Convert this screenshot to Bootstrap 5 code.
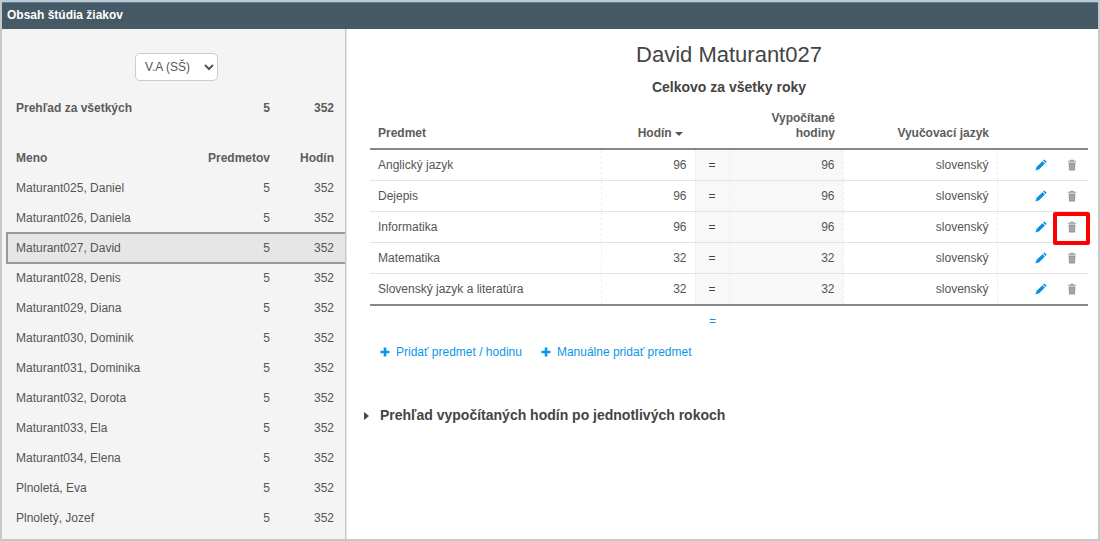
<!DOCTYPE html>
<html lang="sk">
<head>
<meta charset="utf-8">
<title>Obsah štúdia žiakov</title>
<link href="https://cdn.jsdelivr.net/npm/bootstrap@5.3.0/dist/css/bootstrap.min.css" rel="stylesheet">
<style>
html,body{height:100%;overflow:hidden;background:#fff}
body{font-family:"Liberation Sans",Arial,sans-serif;font-size:12px;color:#555}
.frame{height:541px;border:2px solid #c8c8c8}
.topbar{height:27px;background:#455a64;border-top:1px solid #3f86bd;color:#fff;font-weight:700;font-size:12px;line-height:25px;padding-left:5px}
.side{width:344px;background:#f4f4f4;border-right:1px solid #c8c8c8;box-shadow:1px 0 0 #e6e6e6;flex:none;overflow:hidden}
.sel-wrap{padding:24px 0 0 6px;height:64px;text-align:center}
.sel-box{width:83px;height:28px;font-size:12px;border:1px solid #ccc;border-radius:5px;background:#fff;color:#555;padding:0 0 0 5px;font-family:inherit}
.srow{height:30px;padding:0 11px 0 14px;align-items:center}
.srow .nm{flex:1 1 auto}
.srow .pr{flex:none;width:70px;text-align:right}
.srow .ho{flex:none;width:64px;text-align:right}
.shead{font-weight:700;color:#5c5c5c}
.total{margin-bottom:20px}
.srow.cur{background:#e6e6e6;border:2px solid #999;border-right:0;margin-left:4px;padding-left:8px;height:32px;margin-top:-1px;margin-bottom:-1px;position:relative}
.mainp{flex:1 1 auto;padding:0 10px 0 24px;min-width:0}
.who{font-size:22px;font-weight:400;color:#444;text-align:center;margin:12px 0 0;line-height:27px}
.all{font-size:14px;font-weight:700;color:#444;text-align:center;margin:10px 0 0;line-height:18px}
.grid-t{width:718px;table-layout:fixed;margin:12px 0 0;border-collapse:collapse}
.grid-t th{font-weight:700;color:#5c5c5c;vertical-align:bottom;padding:0 8px 7px;line-height:15px;border-bottom:2px solid #888;height:41px}
.grid-t th.hrs{padding-right:12px}
.grid-t td{height:31px;padding:0 8px;border-bottom:1px solid #e3e3e3;border-right:1px dashed #eee;vertical-align:middle}
.grid-t tbody tr:last-child td{border-bottom:2px solid #888;height:32px}
.grid-t .shade{background:#f8f8f8}
.grid-t .eqc{text-align:center;padding:0;color:#444}
.grid-t td:last-child{border-right:0}
.acts{position:relative}
.acts svg{position:absolute;top:50%;margin-top:-6px}
.acts .ed{left:37px}
.acts .tr{left:68px}
.mark-box{position:absolute;left:55px;top:0;width:37px;height:33px;border:4px solid #f00;border-radius:2px}
.dot-eq{color:#0a97e8;text-align:right;width:346px;line-height:14px;margin-top:8px}
.adds{margin:16px 0 0 10px;gap:19px;line-height:16px}
.adds a{color:#0a97e8;text-decoration:none}
.adds svg{margin-right:6px;vertical-align:-1px}
.more{margin:46px 0 0 -6px;font-size:14px;font-weight:700;color:#444;line-height:18px}
.more svg{margin-right:11px}
</style>
</head>
<body>
<svg width="0" height="0" class="position-absolute">
  <symbol id="ic-pen" viewBox="0 0 12 12"><path d="M9.300.4 11.700 2.800 10.500 4 8.100 1.600zM7.500 2.200l2.400 2.400-5.700 5.700-3.800 1.300 1.300-3.800z" fill="#0a8fe6"/></symbol>
  <symbol id="ic-bin" viewBox="0 0 12 12"><path d="M4.500.8h3l.4.9h2.200v1.100H1.900V1.700h2.200zM2.600 3.500h6.800l-.4 8H3z" fill="#999"/><path d="M4.700 5v5M6 5v5M7.300 5v5" stroke="#bbb" stroke-width=".6"/></symbol>
  <symbol id="ic-add" viewBox="0 0 10 10"><path d="M3.700.5h2.600v3.200h3.200v2.600H6.300v3.200H3.700V6.300H.5V3.700h3.200z" fill="#0a97e8"/></symbol>
</svg>
<div class="frame d-flex flex-column">
  <div class="topbar">Obsah štúdia žiakov</div>
  <div class="d-flex flex-grow-1 overflow-hidden">
    <div class="side">
      <div class="sel-wrap"><select class="sel-box"><option>V.A (SŠ)</option></select></div>
      <div class="srow d-flex shead total"><span class="nm">Prehľad za všetkých</span><span class="pr">5</span><span class="ho">352</span></div>
      <div class="srow d-flex shead"><span class="nm">Meno</span><span class="pr">Predmetov</span><span class="ho">Hodín</span></div>
      <div class="srow d-flex"><span class="nm">Maturant025, Daniel</span><span class="pr">5</span><span class="ho">352</span></div>
      <div class="srow d-flex"><span class="nm">Maturant026, Daniela</span><span class="pr">5</span><span class="ho">352</span></div>
      <div class="srow d-flex cur"><span class="nm">Maturant027, David</span><span class="pr">5</span><span class="ho">352</span></div>
      <div class="srow d-flex"><span class="nm">Maturant028, Denis</span><span class="pr">5</span><span class="ho">352</span></div>
      <div class="srow d-flex"><span class="nm">Maturant029, Diana</span><span class="pr">5</span><span class="ho">352</span></div>
      <div class="srow d-flex"><span class="nm">Maturant030, Dominik</span><span class="pr">5</span><span class="ho">352</span></div>
      <div class="srow d-flex"><span class="nm">Maturant031, Dominika</span><span class="pr">5</span><span class="ho">352</span></div>
      <div class="srow d-flex"><span class="nm">Maturant032, Dorota</span><span class="pr">5</span><span class="ho">352</span></div>
      <div class="srow d-flex"><span class="nm">Maturant033, Ela</span><span class="pr">5</span><span class="ho">352</span></div>
      <div class="srow d-flex"><span class="nm">Maturant034, Elena</span><span class="pr">5</span><span class="ho">352</span></div>
      <div class="srow d-flex"><span class="nm">Plnoletá, Eva</span><span class="pr">5</span><span class="ho">352</span></div>
      <div class="srow d-flex"><span class="nm">Plnoletý, Jozef</span><span class="pr">5</span><span class="ho">352</span></div>
    </div>
    <div class="mainp">
      <h1 class="who">David Maturant027</h1>
      <div class="all">Celkovo za všetky roky</div>
      <table class="grid-t">
        <colgroup><col style="width:231px"><col style="width:94px"><col style="width:34px"><col style="width:114px"><col style="width:154px"><col style="width:91px"></colgroup>
        <thead><tr>
          <th>Predmet</th>
          <th class="text-end hrs">Hodín <svg width="8" height="4" viewBox="0 0 8 4"><path d="M0 0h8L4 4z" fill="#555"/></svg></th>
          <th></th>
          <th class="text-end">Vypočítané<br>hodiny</th>
          <th class="text-end">Vyučovací jazyk</th>
          <th></th>
        </tr></thead>
        <tbody>
          <tr><td>Anglický jazyk</td><td class="text-end">96</td><td class="eqc shade">=</td><td class="text-end shade">96</td><td class="text-end">slovenský</td><td class="acts"><svg class="ed" width="12" height="12"><use href="#ic-pen"/></svg><svg class="tr" width="12" height="12"><use href="#ic-bin"/></svg></td></tr>
          <tr><td>Dejepis</td><td class="text-end">96</td><td class="eqc shade">=</td><td class="text-end shade">96</td><td class="text-end">slovenský</td><td class="acts"><svg class="ed" width="12" height="12"><use href="#ic-pen"/></svg><svg class="tr" width="12" height="12"><use href="#ic-bin"/></svg></td></tr>
          <tr><td>Informatika</td><td class="text-end">96</td><td class="eqc shade">=</td><td class="text-end shade">96</td><td class="text-end">slovenský</td><td class="acts"><svg class="ed" width="12" height="12"><use href="#ic-pen"/></svg><svg class="tr" width="12" height="12"><use href="#ic-bin"/></svg><span class="mark-box"></span></td></tr>
          <tr><td>Matematika</td><td class="text-end">32</td><td class="eqc shade">=</td><td class="text-end shade">32</td><td class="text-end">slovenský</td><td class="acts"><svg class="ed" width="12" height="12"><use href="#ic-pen"/></svg><svg class="tr" width="12" height="12"><use href="#ic-bin"/></svg></td></tr>
          <tr><td>Slovenský jazyk a literatúra</td><td class="text-end">32</td><td class="eqc shade">=</td><td class="text-end shade">32</td><td class="text-end">slovenský</td><td class="acts"><svg class="ed" width="12" height="12"><use href="#ic-pen"/></svg><svg class="tr" width="12" height="12"><use href="#ic-bin"/></svg></td></tr>
        </tbody>
      </table>
      <div class="dot-eq">=</div>
      <div class="adds d-flex">
        <a href="#"><svg width="10" height="10"><use href="#ic-add"/></svg>Pridať predmet / hodinu</a>
        <a href="#"><svg width="10" height="10"><use href="#ic-add"/></svg>Manuálne pridať predmet</a>
      </div>
      <div class="more"><svg width="5" height="8" viewBox="0 0 5 8"><path d="M0 0l5 4-5 4z" fill="#444"/></svg>Prehľad vypočítaných hodín po jednotlivých rokoch</div>
    </div>
  </div>
</div>
<script src="https://cdn.jsdelivr.net/npm/bootstrap@5.3.0/dist/js/bootstrap.bundle.min.js"></script>
</body>
</html>
